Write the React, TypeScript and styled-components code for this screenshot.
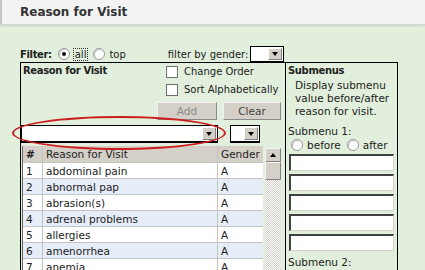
import React from "react";
import styled, { createGlobalStyle } from "styled-components";

const Global = createGlobalStyle`
  html, body { margin: 0; padding: 0; }
  body {
    background: #e1efdc;
    font-family: "DejaVu Sans", Tahoma, sans-serif;
    font-size: 10px;
    color: #222;
    overflow: hidden;
  }
`;

const Header = styled.div`
  height: 24px;
  background: #f3f3f3;
  border-left: 2px solid #c4c4c4;
  border-bottom: 1px solid #d6d6d6;
  box-shadow: 0 1px 2px rgba(0,0,0,0.12);
  display: flex;
  align-items: center;
  padding-left: 18px;
`;

const HeaderTitle = styled.div`
  font-weight: bold;
  font-size: 12px;
  color: #333;
`;

const Body = styled.div`
  padding: 21px 0 0 20px;
`;

const FilterRow = styled.div`
  height: 16px;
  display: flex;
  align-items: center;
  width: 265px;
`;

const Bold = styled.span`
  font-weight: bold;
  letter-spacing: -0.35px;
  margin-right: 3px;
`;

const Radio = styled.span<{ $on?: boolean }>`
  display: inline-block;
  position: relative;
  width: 10px;
  height: 10px;
  border-radius: 50%;
  background: #fff;
  border: 1px solid #9a9a9a;
  box-shadow: inset 1px 1px 1px #c8c8c8;
  margin: 0 4px 0 3px;
  flex: none;
  &::after {
    content: "";
    display: ${(p) => (p.$on ? "block" : "none")};
    position: absolute;
    left: 3px;
    top: 3px;
    width: 4px;
    height: 4px;
    border-radius: 50%;
    background: #111;
  }
`;

const FocusLabel = styled.span`
  outline: 1px dotted #333;
  padding: 0 1px;
  margin-right: 3px;
`;

const Label = styled.span<{ $ml?: number }>`
  margin-left: ${(p) => p.$ml ?? 0}px;
  white-space: nowrap;
`;

const SelectBox = styled.div<{ $w: number; $thick?: boolean }>`
  width: ${(p) => p.$w}px;
  height: ${(p) => (p.$thick ? 18 : 16)}px;
  box-sizing: border-box;
  background: #fff;
  border: 1px solid #000;
  border-bottom-width: ${(p) => (p.$thick ? 2 : 1)}px;
  display: flex;
  justify-content: flex-end;
  align-items: stretch;
  padding: 1px;
  flex: none;
`;

const Arrow = styled.div`
  width: 12px;
  background: #d4d0c8;
  border-top: 1px solid #fff;
  border-left: 1px solid #fff;
  border-right: 1px solid #808080;
  border-bottom: 1px solid #808080;
  display: flex;
  align-items: center;
  justify-content: center;
  &::before {
    content: "";
    border-left: 3.5px solid transparent;
    border-right: 3.5px solid transparent;
    border-top: 4px solid #000;
  }
`;

const MainBox = styled.div`
  width: 378px;
  box-sizing: border-box;
  border: 1px solid #000;
  display: flex;
  height: 260px;
`;

const LeftPanel = styled.div`
  width: 264px;
  border-right: 1px solid #000;
  display: flex;
  flex-direction: column;
`;

const TopArea = styled.div`
  display: flex;
  justify-content: space-between;
  height: 60px;
`;

const PanelTitle = styled.div`
  font-weight: bold;
  letter-spacing: -0.35px;
  padding: 2px 0 0 2px;
`;

const Controls = styled.div`
  width: 124px;
  margin-right: 4px;
  padding-top: 3px;
  display: flex;
  flex-direction: column;
`;

const CheckRow = styled.div`
  height: 18px;
  display: flex;
  align-items: flex-start;
  padding-left: 9px;
  gap: 6px;
  white-space: nowrap;
  line-height: 12px;
`;

const CheckBox = styled.span`
  width: 10px;
  height: 10px;
  background: #fff;
  border: 1px solid #6f6f6f;
  flex: none;
`;

const ButtonRow = styled.div`
  display: flex;
  gap: 6px;
`;

const Button = styled.div<{ $w: number; $disabled?: boolean }>`
  width: ${(p) => p.$w}px;
  height: 18px;
  box-sizing: border-box;
  background: #d4d0c8;
  border-top: 1px solid #f4f4f4;
  border-left: 1px solid #f4f4f4;
  border-right: 1px solid #8a8a8a;
  border-bottom: 1px solid #8a8a8a;
  display: flex;
  align-items: center;
  justify-content: center;
  color: ${(p) => (p.$disabled ? "#8a8a8a" : "#444")};
  font-size: 10.5px;
`;

const SelectRow = styled.div`
  position: relative;
  display: flex;
  gap: 12px;
  margin-top: 2px;
`;

const Ellipse = styled.div`
  position: absolute;
  left: -9px;
  top: -9px;
  width: 214px;
  height: 34px;
  border: 2px solid #cc1f1f;
  border-radius: 50%;
  box-sizing: border-box;
  pointer-events: none;
`;

const TableArea = styled.div`
  display: flex;
  margin-top: 3px;
  padding-left: 1px;
  gap: 2px;
`;

const Table = styled.div`
  width: 241px;
  border-left: 1px solid #666;
  box-sizing: border-box;
`;

const Row = styled.div<{ $head?: boolean; $alt?: boolean }>`
  display: grid;
  grid-template-columns: 20px 175px 45px;
  height: ${(p) => (p.$head ? 17 : 16)}px;
  background: ${(p) => (p.$head ? "#d4d0c8" : p.$alt ? "#e6ecf8" : "#fff")};
  border-bottom: 1px solid #c4c4c4;
  box-sizing: border-box;
`;

const Cell = styled.div<{ $bold?: boolean; $last?: boolean }>`
  display: flex;
  align-items: center;
  padding-left: 3px;
  border-right: ${(p) => (p.$last ? "none" : "1px solid #c4c4c4")};
  font-weight: ${(p) => (p.$bold ? "bold" : "normal")};
  white-space: nowrap;
  overflow: hidden;
  font-size: 10.5px;
`;

const Scrollbar = styled.div`
  width: 16px;
  margin-top: 2px;
  display: flex;
  flex-direction: column;
  background: repeating-conic-gradient(#ffffff 0% 25%, #d4d0c8 0% 50%) 0 0 / 2px 2px;
`;

const ScrollBtn = styled.div<{ $h: number; $arrow?: boolean }>`
  height: ${(p) => p.$h}px;
  box-sizing: border-box;
  background: #d4d0c8;
  border-top: 1px solid #f4f4f4;
  border-left: 1px solid #f4f4f4;
  border-right: 1px solid #808080;
  border-bottom: 1px solid #808080;
  display: flex;
  align-items: center;
  justify-content: center;
  &::before {
    content: "";
    display: ${(p) => (p.$arrow ? "block" : "none")};
    border-left: 3.5px solid transparent;
    border-right: 3.5px solid transparent;
    border-bottom: 4px solid #000;
  }
`;

const RightPanel = styled.div`
  width: 111px;
  padding: 2px 0 0 2px;
  box-sizing: border-box;
  display: flex;
  flex-direction: column;
`;

const Desc = styled.div`
  padding-left: 7px;
  margin-top: 3px;
  line-height: 13px;
  font-size: 10.5px;
`;

const SubLabel = styled.div<{ $mt: number }>`
  margin-top: ${(p) => p.$mt}px;
  font-size: 10.5px;
`;

const RadioRow = styled.div`
  display: flex;
  align-items: center;
  height: 14px;
  margin-top: 1px;
  font-size: 10.5px;
`;

const Inputs = styled.div`
  display: flex;
  flex-direction: column;
  gap: 3px;
  margin: 2px 0 0 1px;
`;

const TextInput = styled.div`
  width: 105px;
  height: 17px;
  box-sizing: border-box;
  background: #fff;
  border-top: 2px solid #404040;
  border-left: 2px solid #404040;
  border-right: 1px solid #d4d0c8;
  border-bottom: 1px solid #d4d0c8;
`;

const rows = [
  "abdominal pain",
  "abnormal pap",
  "abrasion(s)",
  "adrenal problems",
  "allergies",
  "amenorrhea",
  "anemia",
];

export default function App() {
  return (
    <>
      <Global />
      <Header>
        <HeaderTitle>Reason for Visit</HeaderTitle>
      </Header>
      <Body>
        <FilterRow>
          <Bold>Filter:</Bold>
          <Radio $on />
          <FocusLabel>all</FocusLabel>
          <Radio />
          <Label>top</Label>
          <Label $ml={42}>filter by gender:</Label>
          <SelectBox $w={34} style={{ marginLeft: 2 }}>
            <Arrow />
          </SelectBox>
        </FilterRow>
        <MainBox>
          <LeftPanel>
            <TopArea>
              <PanelTitle>Reason for Visit</PanelTitle>
              <Controls>
                <CheckRow>
                  <CheckBox />
                  Change Order
                </CheckRow>
                <CheckRow>
                  <CheckBox />
                  Sort Alphabetically
                </CheckRow>
                <ButtonRow>
                  <Button $w={60} $disabled>
                    Add
                  </Button>
                  <Button $w={58}>Clear</Button>
                </ButtonRow>
              </Controls>
            </TopArea>
            <SelectRow>
              <SelectBox $w={197} $thick>
                <Arrow />
              </SelectBox>
              <SelectBox $w={30} $thick>
                <Arrow />
              </SelectBox>
              <Ellipse />
            </SelectRow>
            <TableArea>
              <Table>
                <Row $head>
                  <Cell $bold>#</Cell>
                  <Cell>Reason for Visit</Cell>
                  <Cell $last>Gender</Cell>
                </Row>
                {rows.map((r, i) => (
                  <Row key={r} $alt={i % 2 === 1}>
                    <Cell>{i + 1}</Cell>
                    <Cell>{r}</Cell>
                    <Cell $last>A</Cell>
                  </Row>
                ))}
              </Table>
              <Scrollbar>
                <ScrollBtn $h={14} $arrow />
                <ScrollBtn $h={18} />
              </Scrollbar>
            </TableArea>
          </LeftPanel>
          <RightPanel>
            <Bold>Submenus</Bold>
            <Desc>
              Display submenu
              <br />
              value before/after
              <br />
              reason for visit.
            </Desc>
            <SubLabel $mt={7}>Submenu 1:</SubLabel>
            <RadioRow>
              <Radio />
              <Label>before</Label>
              <Radio style={{ marginLeft: 6 }} />
              <Label>after</Label>
            </RadioRow>
            <Inputs>
              <TextInput />
              <TextInput />
              <TextInput />
              <TextInput />
              <TextInput />
            </Inputs>
            <SubLabel $mt={5}>Submenu 2:</SubLabel>
          </RightPanel>
        </MainBox>
      </Body>
    </>
  );
}
